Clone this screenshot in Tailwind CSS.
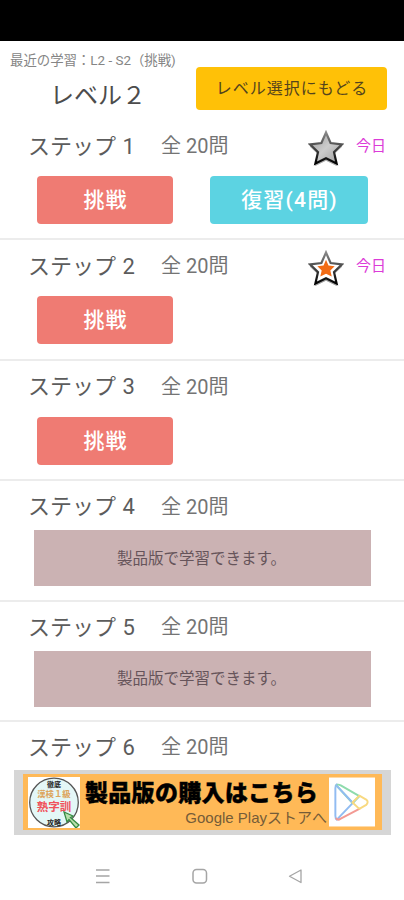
<!DOCTYPE html>
<html lang="ja">
<head>
<meta charset="utf-8">
<title>レベル２</title>
<script src="https://cdn.jsdelivr.net/npm/@tailwindcss/browser@4"></script>
</head>
<body class="bg-white">
<svg class="absolute w-0 h-0">
  <defs>
    <linearGradient id="silver" x1="0" y1="0" x2="1" y2="1"><stop offset="0" stop-color="#999"/><stop offset=".5" stop-color="#ccc"/><stop offset="1" stop-color="#999"/></linearGradient>
    <linearGradient id="edge" x1="0" y1="0" x2="0" y2="1"><stop offset="0" stop-color="#888"/><stop offset=".5" stop-color="#444"/><stop offset="1" stop-color="#000"/></linearGradient>
    <path id="star" d="M18 2.500 L22.600 13 L34 14.300 L26 22 L28.600 33.500 L18 28.300 L7.400 33.500 L10 22 L2 14.300 L13.400 13 Z"/>
  </defs>
</svg>
<main class="w-[404px] h-[900px] overflow-hidden flex flex-col bg-white text-[#666] font-['Roboto','Noto_Sans_CJK_JP',sans-serif]">
  <div class="h-[41px] shrink-0 bg-black"></div>
  <header class="h-[79px] shrink-0 flex">
    <div class="w-[195px] shrink-0 whitespace-nowrap">
      <p class="pl-[10px] pt-[10px] text-[13.4px] leading-[20px] text-[#858585]">最近の学習：L2 - S2（挑戦)</p>
      <h1 class="pl-[50px] pt-[8px] text-[24px] leading-[34px] text-[#4c4c4c]">レベル２</h1>
    </div>
    <button class="mt-[26px] ml-px w-[191px] h-[43px] rounded-[4px] bg-[#ffc107] text-[#54441c] text-[16px] tracking-[1px] pl-px pt-px">レベル選択にもどる</button>
  </header>

  <div class="h-[650px] shrink-0 overflow-hidden">
    <section class="h-[120.4px] border-b-2 border-[#ececec]">
      <div class="h-[55px] flex items-center pl-[28px] pr-[18px] pb-[3px] whitespace-nowrap">
        <h2 class="w-[133px] text-[22px] text-[#5c5c5c] [word-spacing:1px]">ステップ 1</h2><span class="text-[20px] flex-1 text-[#747474]">全 20問</span>
        <svg class="w-[36px] h-[38px] mr-[12px] mt-[5px]" viewBox="0 0 36 38"><use href="#star" transform="translate(0 2)" fill="#000" stroke="#000" opacity=".3"/><use href="#star" fill="url(#silver)" stroke="url(#edge)" stroke-width="2.2"/></svg>
        <span class="text-[15px] text-[#dc3bd8]">今日</span>
      </div>
      <div class="flex pl-[37px] pt-px gap-[37px] text-white text-[21px] font-medium">
        <button class="w-[136px] h-[48px] pt-px pl-px rounded-[4px] bg-[#ef7b73] tracking-[1px]">挑戦</button>
        <button class="w-[158px] h-[48px] pt-px pl-px rounded-[4px] bg-[#5cd3e2] tracking-[1.2px]">復習(4問)</button>
      </div>
    </section>
    <section class="h-[120.4px] border-b-2 border-[#ececec]">
      <div class="h-[55px] flex items-center pl-[28px] pr-[18px] pb-[3px] whitespace-nowrap">
        <h2 class="w-[133px] text-[22px] text-[#5c5c5c] [word-spacing:1px]">ステップ 2</h2><span class="text-[20px] flex-1 text-[#747474]">全 20問</span>
        <svg class="w-[36px] h-[38px] mr-[12px] mt-[5px]" viewBox="0 0 36 38"><use href="#star" transform="translate(0 2)" fill="#000" stroke="#000" opacity=".35"/><use href="#star" fill="#fff" stroke="url(#edge)" stroke-width="2.2"/><use href="#star" fill="#f26b14" transform="translate(8.3 8.5) scale(.54)"/></svg>
        <span class="text-[15px] text-[#dc3bd8]">今日</span>
      </div>
      <div class="flex pl-[37px] pt-px text-white text-[21px] font-medium">
        <button class="w-[136px] h-[48px] pt-px pl-px rounded-[4px] bg-[#ef7b73] tracking-[1px]">挑戦</button>
      </div>
    </section>
    <section class="h-[120.4px] border-b-2 border-[#ececec]">
      <div class="h-[55px] flex items-center pl-[28px] pb-[3px] whitespace-nowrap">
        <h2 class="w-[133px] text-[22px] text-[#5c5c5c] [word-spacing:1px]">ステップ 3</h2><span class="text-[20px] text-[#747474]">全 20問</span>
      </div>
      <div class="flex pl-[37px] pt-px text-white text-[21px] font-medium">
        <button class="w-[136px] h-[48px] pt-px pl-px rounded-[4px] bg-[#ef7b73] tracking-[1px]">挑戦</button>
      </div>
    </section>
    <section class="h-[120.4px] border-b-2 border-[#ececec]">
      <div class="h-[49px] pt-[2px] flex items-center pl-[28px] whitespace-nowrap">
        <h2 class="w-[133px] text-[22px] text-[#5c5c5c] [word-spacing:1px]">ステップ 4</h2><span class="text-[20px] text-[#747474]">全 20問</span>
      </div>
      <div class="ml-[34px] w-[337px] h-[56px] bg-[#cbb2b3] text-[#66545a] text-[15.5px] flex items-center pt-[2px] pl-[83px]">製品版で学習できます。</div>
    </section>
    <section class="h-[120.4px] border-b-2 border-[#ececec]">
      <div class="h-[49px] pt-[2px] flex items-center pl-[28px] whitespace-nowrap">
        <h2 class="w-[133px] text-[22px] text-[#5c5c5c] [word-spacing:1px]">ステップ 5</h2><span class="text-[20px] text-[#747474]">全 20問</span>
      </div>
      <div class="ml-[34px] w-[337px] h-[56px] bg-[#cbb2b3] text-[#66545a] text-[15.5px] flex items-center pt-[2px] pl-[83px]">製品版で学習できます。</div>
    </section>
    <section class="h-[48px]">
      <div class="h-[49px] pt-[2px] flex items-center pl-[28px] whitespace-nowrap">
        <h2 class="w-[133px] text-[22px] text-[#5c5c5c] [word-spacing:1px]">ステップ 6</h2><span class="text-[20px] text-[#747474]">全 20問</span>
      </div>
    </section>
  </div>

  <aside class="ml-[14px] w-[377px] h-[65px] shrink-0 bg-[#d6d6d6] pt-[4px] pl-[9px]">
    <div class="w-[359px] h-[56px] bg-[#ffb957] flex items-center pl-[5px]">
      <svg class="w-[52px] h-[51px] shrink-0" viewBox="0 0 52 51" font-family="'Noto Sans CJK JP',sans-serif" font-weight="700" text-anchor="middle">
        <rect width="52" height="51" fill="#fff"/>
        <circle cx="26" cy="25.500" r="24.300" fill="#e4f7f7" stroke="#555" stroke-width="1.3"/>
        <text x="26" y="9.500" font-size="7" fill="#222">徹底</text>
        <text x="26" y="20" font-size="8.400" fill="#dda45c">漢検１級</text>
        <text x="26" y="33.500" font-size="11.500" fill="#f0525c">熟字訓</text>
        <text x="26" y="47.500" font-size="7" fill="#222">攻略</text>
        <path d="M36 35 L45 39 L42.500 40.500 L51 48 L48 51 L41 42.500 L39 45 Z" fill="#b8dfac" stroke="#358a43" stroke-width="1.3"/>
      </svg>
      <div class="w-[247px] h-[56px] pl-[5px] shrink-0 whitespace-nowrap">
        <p class="mt-[6px] text-[23px] leading-[28px] tracking-[0.3px] font-black text-black [-webkit-text-stroke:0.4px_black]">製品版の購入はこちら</p>
        <p class="text-right pt-px text-[15px] leading-[18px] text-[#755c38] font-['Liberation_Sans','Noto_Sans_CJK_JP',sans-serif]">Google Playストアへ</p>
      </div>
      <svg class="w-[46px] h-[50px] ml-[2px] shrink-0" viewBox="0 0 47 50" fill="none" stroke-width="2" stroke-linejoin="round" stroke-linecap="round">
        <rect width="47" height="50" fill="#fff"/>
        <path d="M8 7 Q6.500 8 6.500 11 V39 Q6.500 42 8 43 L31 19" stroke="#91bcf2"/>
        <path d="M7.500 8 Q9 6.500 12 8 L31 19 L24 26 Z" stroke="#8edbac"/>
        <path d="M7.500 42 Q9 44 12 42 L31 32" stroke="#f39a94"/>
        <path d="M7.500 8 L24 25.500" stroke="#91bcf2"/>
        <path d="M31 18.500 L38 22.500 Q41 25 38 28 L31 32 L24 25.500 Z" stroke="#f8d980"/>
      </svg>
    </div>
  </aside>

  <nav class="h-[65px] flex items-center justify-center pt-[17px]">
    <svg class="w-[210px] h-[18px] mr-[4px]" viewBox="0 0 210 18" fill="none" stroke="#a5a5a5" stroke-width="1.5">
      <path d="M1 3 H14.500 M1 9 H14.500 M1 15.500 H14.500"/>
      <rect x="98" y="2.500" width="13.500" height="13.500" rx="3.500"/>
      <path d="M206 3 V15.500 L194.500 9.300 Z" stroke-linejoin="round" stroke-width="1.3"/>
    </svg>
  </nav>
</main>
</body>
</html>
